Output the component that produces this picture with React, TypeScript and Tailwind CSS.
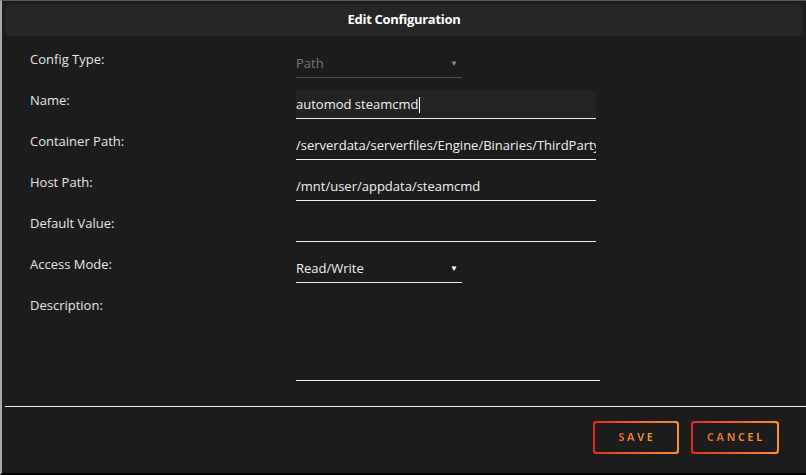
import React from 'react';

const font = { fontFamily: '"Open Sans", "Noto Sans", sans-serif' };

type Row = { label: string; value?: string; kind?: 'text' | 'select' | 'disabled' | 'focus' };

const rows: Row[] = [
  { label: 'Config Type:', value: 'Path', kind: 'disabled' },
  { label: 'Name:', value: 'automod steamcmd', kind: 'focus' },
  { label: 'Container Path:', value: '/serverdata/serverfiles/Engine/Binaries/ThirdParty/SteamCMD/Linux' },
  { label: 'Host Path:', value: '/mnt/user/appdata/steamcmd' },
  { label: 'Default Value:', value: '' },
  { label: 'Access Mode:', value: 'Read/Write', kind: 'select' },
];

const Field: React.FC<{ row: Row }> = ({ row }) => {
  if (row.kind === 'disabled') {
    return (
      <div className="mt-[12px] h-[29px] w-[166px] border-b border-[#4a4a4a] flex items-center justify-between pr-[4px]">
        <span className="text-[13px] text-[#7a7a7a] pt-[2px]">{row.value}</span>
        <span className="text-[8px] text-[#8a8a8a]">▼</span>
      </div>
    );
  }
  if (row.kind === 'select') {
    return (
      <div className="mt-[12px] h-[29px] w-[166px] border-b border-[#f0f0f0] flex items-center justify-between pr-[4px]">
        <span className="text-[13px] text-[#f2f2f2] pt-[2px]">{row.value}</span>
        <span className="text-[8px] text-white">▼</span>
      </div>
    );
  }
  return (
    <div
      className={
        'mt-[12px] h-[29px] w-[300px] border-b border-[#f0f0f0] flex items-center overflow-hidden whitespace-nowrap ' +
        (row.kind === 'focus' ? 'bg-[#232323]' : '')
      }
    >
      <span className="text-[13px] text-[#f2f2f2] pt-[2px]">{row.value}</span>
      {row.kind === 'focus' && <span className="ml-[1px] mt-[2px] h-[16px] w-[1px] bg-white" />}
    </div>
  );
};

const Button: React.FC<{ label: string; w: string }> = ({ label, w }) => (
  <div className={'p-[2px] rounded-[3px] bg-gradient-to-r from-[#e22828] to-[#ff8c2f] h-[33px] ' + w}>
    <div className="h-full w-full rounded-[2px] bg-[#1c1c1c] flex items-center justify-center">
      <span className="text-[11px] font-bold tracking-[2.5px] bg-gradient-to-r from-[#e8622b] to-[#f09a32] bg-clip-text text-transparent pl-[2px]">
        {label}
      </span>
    </div>
  </div>
);

export default function App() {
  return (
    <div
      style={font}
      className="w-[806px] h-[475px] bg-[#1c1c1c] border-t border-t-[#5a5a5a] border-l-2 border-l-[#a8a8a8] border-b-2 border-b-black flex flex-col overflow-hidden"
    >
      <div className="mx-[3px] mt-[3px] h-[32px] rounded-[6px] bg-[#262626] flex items-center justify-center">
        <span className="text-[13px] font-bold text-white tracking-[-0.3px]">Edit Configuration</span>
      </div>

      <div className="flex flex-col mt-[1px]">
        {rows.map(r => (
          <div key={r.label} className="flex h-[41px]">
            <div className="w-[294px] pl-[28px] pt-[12px] leading-[20px] text-[13px] text-[#e6e6e6]">{r.label}</div>
            <Field row={r} />
          </div>
        ))}
        <div className="flex h-[98px]">
          <div className="w-[294px] pl-[28px] pt-[12px] leading-[20px] text-[13px] text-[#e6e6e6]">Description:</div>
          <div className="mt-[12px] h-[86px] w-[304px] border-b border-[#f0f0f0]" />
        </div>
      </div>

      <div className="ml-[3px] mt-[25px] h-[1px] bg-[#f0f0f0]" />

      <div className="flex justify-end gap-[12px] pr-[27px] mt-[14px]">
        <Button label="SAVE" w="w-[86px]" />
        <Button label="CANCEL" w="w-[88px]" />
      </div>
    </div>
  );
}
